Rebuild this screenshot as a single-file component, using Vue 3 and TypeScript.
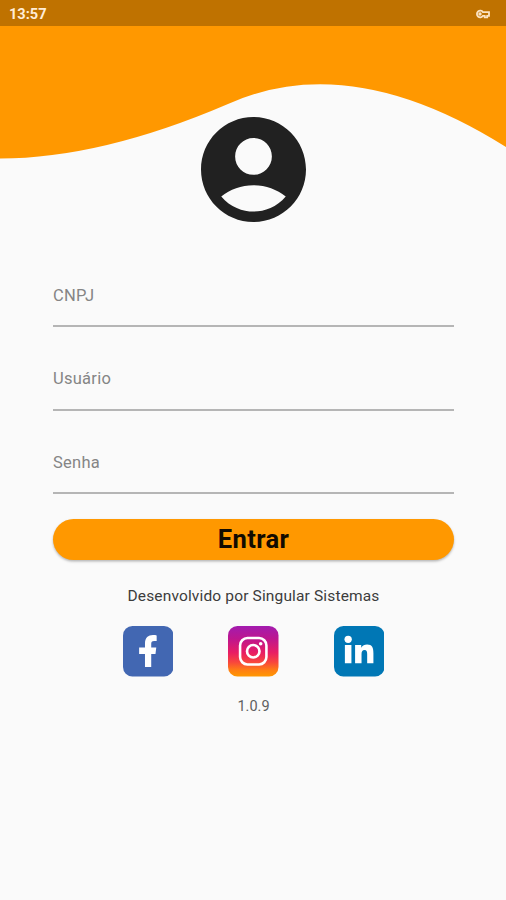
<script setup lang="ts">
interface Field {
  id: string
  label: string
  type: string
}

const fields: Field[] = [
  { id: 'cnpj', label: 'CNPJ', type: 'text' },
  { id: 'user', label: 'Usuário', type: 'text' },
  { id: 'password', label: 'Senha', type: 'password' },
]
</script>

<template>
  <div class="screen">
    <header class="status">
      <span class="time">13:57</span>
      <svg class="key" viewBox="0 0 15 10" fill="none" stroke="#fbe3c2" stroke-width="1.8">
        <path d="M8 3.2A3.3 3.3 0 1 0 8 6.8H9.7V8.3H12.2V6.8H14V3.2Z" />
        <circle cx="5" cy="5" r="0.8" />
      </svg>
    </header>

    <svg class="wave" viewBox="0 26 506 133" preserveAspectRatio="none">
      <path d="M0 26V158.5Q101 158.5 228 104Q350 49 506 147V26Z" fill="#ff9800" />
    </svg>

    <main class="content">
      <svg class="avatar" viewBox="2 2 20 20" fill="#212121">
        <path d="M12 2C6.48 2 2 6.48 2 12s4.48 10 10 10 10-4.48 10-10S17.52 2 12 2zm0 4c1.93 0 3.5 1.57 3.5 3.5S13.93 13 12 13s-3.5-1.57-3.5-3.5S10.07 6 12 6zm0 14c-2.03 0-4.43-.82-6.14-2.88C7.55 15.8 9.68 15 12 15s4.45.8 6.14 2.12C16.43 19.18 14.03 20 12 20z" />
      </svg>

      <form class="form" @submit.prevent>
        <input
          v-for="field in fields"
          :key="field.id"
          class="field"
          :type="field.type"
          :placeholder="field.label"
        />
        <button class="submit" type="submit">Entrar</button>
      </form>

      <p class="credit">Desenvolvido por Singular Sistemas</p>

      <nav class="social">
        <svg viewBox="0 0 51 51">
          <rect width="51" height="51" rx="9.5" fill="#4267b2" />
          <path d="M22.2 41.5V28.3H16.3V21.8H22.2V17.8C22.2 12 25.4 9.2 30.3 9.2C32 9.2 33.2 9.3 34 9.5V15.2H31.4C29.1 15.2 28.5 16.5 28.5 18.3V21.8H33.6L32.8 28.3H28.5V41.5Z" fill="#fff" />
        </svg>
        <svg viewBox="0 0 51 51">
          <defs>
            <linearGradient id="sunset" x1="0" y1="0" x2="0" y2="1">
              <stop offset="0" stop-color="#a21caf" />
              <stop offset="0.25" stop-color="#bd168f" />
              <stop offset="0.53" stop-color="#e91e63" />
              <stop offset="0.72" stop-color="#f8473c" />
              <stop offset="0.88" stop-color="#ff8012" />
              <stop offset="1" stop-color="#ff9800" />
            </linearGradient>
          </defs>
          <rect width="51" height="51" rx="9.5" fill="url(#sunset)" />
          <rect x="12.2" y="12.2" width="26.6" height="26.6" rx="7.4" fill="none" stroke="#fff" stroke-width="2.6" />
          <circle cx="25.5" cy="25.5" r="6.3" fill="none" stroke="#fff" stroke-width="2.7" />
          <circle cx="33" cy="18" r="1.8" fill="#fff" />
        </svg>
        <svg viewBox="0 0 51 51">
          <rect width="51" height="51" rx="9.5" fill="#0077b5" />
          <g fill="#fff">
            <circle cx="14.3" cy="13.5" r="3.7" />
            <path d="M11 19.3H17.6V37.5H11ZM21.3 19.3H27.5V21.9C28.8 19.8 30.9 18.8 33.4 18.8C38.6 18.8 39.8 22.3 39.8 27.4V37.5H33.5V28.6C33.5 26.2 33.2 24.3 30.8 24.3C28.5 24.3 27.8 26 27.8 28.5V37.5H21.3Z" />
          </g>
        </svg>
      </nav>

      <p class="version">1.0.9</p>
    </main>
  </div>
</template>

<style>
body {
  margin: 0;
  background: #fafafa;
}
</style>

<style scoped>
.screen {
  display: flex;
  flex-direction: column;
  width: 100%;
  height: 900px;
  overflow: hidden;
  background: #fafafa;
  font-family: Roboto, sans-serif;
}

.status {
  display: flex;
  flex: none;
  align-items: center;
  justify-content: space-between;
  box-sizing: border-box;
  height: 26px;
  padding: 1px 16px 0 9px;
  background: #bf7200;
}

.time {
  color: #ffedd6;
  font-size: 14.6px;
  font-weight: 700;
  line-height: 26px;
}

.key {
  width: 15px;
  height: 10px;
}

.wave {
  display: block;
  flex: none;
  width: 100%;
  height: 133px;
}

.content {
  display: flex;
  flex-direction: column;
  align-items: center;
  margin-top: -42.5px;
  padding: 0 52px 0 53px;
}

.avatar {
  width: 105px;
  height: 105px;
}

.form {
  display: flex;
  flex-direction: column;
  width: 100%;
  margin-top: 42px;
}

.field {
  box-sizing: border-box;
  width: 100%;
  height: 63.5px;
  margin: 0 0 20px;
  padding: 1.5px 0 0;
  border: 0;
  border-bottom: 2px solid #b5b5b5;
  border-radius: 0;
  outline: 0;
  background: transparent;
  color: #212121;
  font-family: inherit;
  font-size: 16.5px;
  letter-spacing: 0.25px;
}

.field::placeholder {
  color: #858585;
  opacity: 1;
}

.submit {
  height: 41px;
  margin: 5px 0 0;
  padding: 0;
  border: 0;
  border-radius: 21px;
  background: #ff9800;
  box-shadow: 0 1.5px 2.5px rgba(0, 0, 0, 0.28);
  color: #120b00;
  font-family: inherit;
  font-size: 25.5px;
  font-weight: 700;
  letter-spacing: 0.4px;
  line-height: 41px;
}

.credit {
  margin: 26px 0 0;
  color: #3c3c3c;
  font-size: 15.5px;
  letter-spacing: 0.15px;
  line-height: 20px;
}

.social {
  display: flex;
  gap: 55px;
  margin-top: 20px;
}

.social svg {
  display: block;
  width: 50.5px;
  height: 50.5px;
}

.version {
  margin: 20.5px 0 0;
  color: #606060;
  font-size: 14.5px;
  line-height: 20px;
}
</style>
